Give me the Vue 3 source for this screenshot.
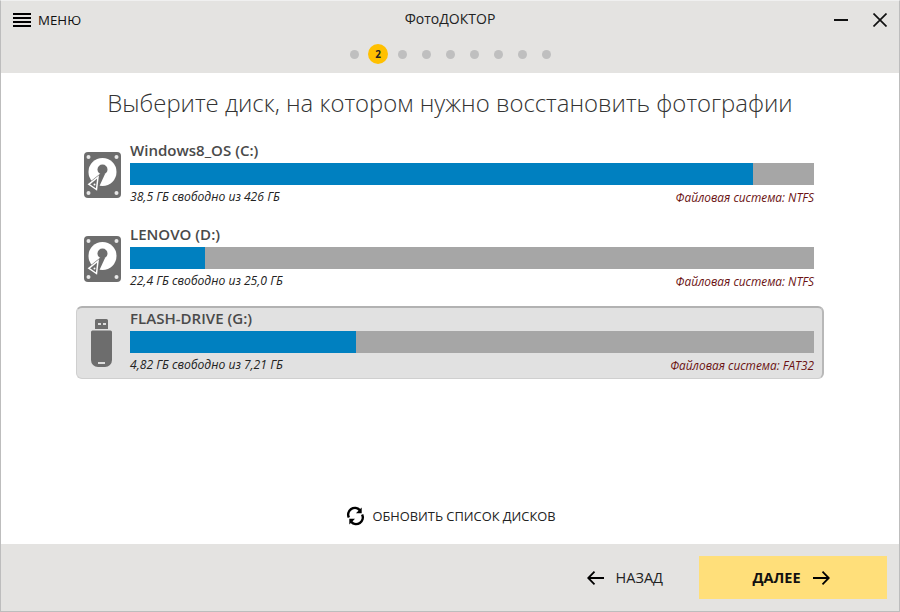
<script setup>
const dots = [1, 2, 3, 4, 5, 6, 7, 8, 9]
const drives = [
  { name: 'Windows8_OS (C:)', used: 91.1, free: '38,5 ГБ свободно из 426 ГБ', fs: 'Файловая система: NTFS', type: 'hdd', selected: false },
  { name: 'LENOVO (D:)', used: 10.96, free: '22,4 ГБ свободно из 25,0 ГБ', fs: 'Файловая система: NTFS', type: 'hdd', selected: false },
  { name: 'FLASH-DRIVE (G:)', used: 33.04, free: '4,82 ГБ свободно из 7,21 ГБ', fs: 'Файловая система: FAT32', type: 'usb', selected: true }
]
</script>

<template>
  <div class="window">
    <header class="header">
      <div class="head-top">
        <div class="menu">
          <svg class="burger" width="18" height="14" viewBox="0 0 18 14"><path d="M0 1h18M0 5h18M0 9h18M0 13h18" stroke="#000" stroke-width="2" /></svg>
          <span>МЕНЮ</span>
        </div>
        <div class="app-title">ФотоДОКТОР</div>
        <div class="win-btns">
          <svg width="14" height="14" viewBox="0 0 14 14"><path d="M0 7h14" stroke="#111" stroke-width="2" /></svg>
          <svg width="14" height="14" viewBox="0 0 14 14"><path d="M0.5 0.5l13 13M13.5 0.5l-13 13" stroke="#111" stroke-width="1.7" /></svg>
        </div>
      </div>
      <div class="steps">
        <span v-for="d in dots" :key="d" class="dot" :class="{ active: d === 2 }">{{ d === 2 ? '2' : '' }}</span>
      </div>
    </header>

    <main class="content">
      <h1 class="title">Выберите диск, на котором нужно восстановить фотографии</h1>
      <div class="drives">
        <div v-for="dr in drives" :key="dr.name" class="drive" :class="{ selected: dr.selected }">
          <div class="icon">
            <svg v-if="dr.type === 'hdd'" width="37" height="46" viewBox="0 0 37 46">
              <rect width="37" height="46" rx="4" fill="#6d6d6d" />
              <circle cx="4.5" cy="5" r="2" fill="#e8e8e8" /><circle cx="32.5" cy="5" r="2" fill="#e8e8e8" />
              <circle cx="4.5" cy="41" r="2" fill="#e8e8e8" /><circle cx="32.5" cy="41" r="2" fill="#e8e8e8" />
              <circle cx="18.5" cy="20" r="14" fill="#fff" />
              <circle cx="18.5" cy="17.5" r="5" fill="#6d6d6d" />
              <path d="M17 21L2.5 32.5 12.5 40.5 21 22z" fill="#6d6d6d" />
              <path d="M4.8 32.3L14 25 12.5 37.5z" fill="none" stroke="#fff" stroke-width="1.5" />
              <circle cx="10.5" cy="32.5" r="1" fill="#fff" />
            </svg>
            <svg v-else class="usb" width="21" height="48" viewBox="0 0 21 48">
              <path d="M4 1.5A1.5 1.5 0 0 1 5.5 0h10A1.5 1.5 0 0 1 17 1.5V10H4z" fill="#6d6d6d" />
              <rect x="7" y="4" width="3" height="2" fill="#ddd" /><rect x="12" y="4" width="3" height="2" fill="#ddd" />
              <path d="M0 13a1.5 1.5 0 0 1 1.5-1.5h18A1.5 1.5 0 0 1 21 13v28a7 7 0 0 1-7 7H7a7 7 0 0 1-7-7z" fill="#6d6d6d" />
              <rect x="7" y="43" width="7" height="2" fill="#ddd" />
            </svg>
          </div>
          <div class="info">
            <div class="name">{{ dr.name }}</div>
            <div class="bar"><div class="fill" :style="{ width: dr.used + '%' }"></div></div>
            <div class="meta">
              <span class="free">{{ dr.free }}</span>
              <span class="fs">{{ dr.fs }}</span>
            </div>
          </div>
        </div>
      </div>
      <div class="refresh">
        <svg width="19" height="20" viewBox="0 0 20 20" fill="none" stroke="#000" stroke-width="2.6">
          <path d="M3 11.5A7 7 0 0 1 14.5 3.8" />
          <path d="M17 8.5A7 7 0 0 1 5.5 16.2" />
          <path d="M16.5 0.5v6h-6z" fill="#000" stroke="none" transform="translate(0 0.5)" />
          <path d="M3.5 19.5v-6h6z" fill="#000" stroke="none" transform="translate(0 -0.5)" />
        </svg>
        <span>ОБНОВИТЬ СПИСОК ДИСКОВ</span>
      </div>
    </main>

    <footer class="footer">
      <div class="back">
        <svg width="17" height="14" viewBox="0 0 17 14" fill="none" stroke="#000" stroke-width="1.8"><path d="M17 7H1M7.5 0.7L1.2 7l6.3 6.3" /></svg>
        <span>НАЗАД</span>
      </div>
      <div class="next">
        <span>ДАЛЕЕ</span>
        <svg width="17" height="14" viewBox="0 0 17 14" fill="none" stroke="#000" stroke-width="1.8"><path d="M0 7h16M9.5 0.7L15.8 7l-6.3 6.3" /></svg>
      </div>
    </footer>
  </div>
</template>

<style scoped>
.window {
  width: 900px;
  height: 612px;
  box-sizing: border-box;
  border: 1px solid #bdbdbd;
  border-top-color: #f0f0f0;
  background: #fff;
  display: flex;
  flex-direction: column;
  font-family: "Open Sans", sans-serif;
  color: #222;
  overflow: hidden;
}
.header {
  height: 72px;
  flex: none;
  background: #e4e3e1;
  display: flex;
  flex-direction: column;
}
.head-top {
  height: 42px;
  display: grid;
  grid-template-columns: 1fr auto 1fr;
  align-items: start;
}
.menu {
  display: flex;
  align-items: center;
  gap: 7px;
  padding: 11px 0 0 12px;
  font-size: 13.3px;
  line-height: 16px;
  color: #111;
}
.app-title {
  font-size: 14px;
  line-height: 18px;
  padding-top: 9px;
  color: #222;
}
.win-btns {
  display: flex;
  justify-content: flex-end;
  gap: 25px;
  padding: 12px 12px 0 0;
}
.steps {
  display: flex;
  align-items: center;
  justify-content: center;
  gap: 15px;
  height: 20px;
  margin-top: 1px;
}
.dot {
  width: 9px;
  height: 9px;
  border-radius: 50%;
  background: #bfbfbf;
}
.dot.active {
  width: 20px;
  height: 20px;
  margin: 0 -5.5px;
  background: #ffc000;
  font-size: 10px;
  font-weight: 700;
  line-height: 20px;
  text-align: center;
  color: #222;
}
.content {
  flex: 1;
  display: flex;
  flex-direction: column;
  align-items: center;
  min-height: 0;
}
.title {
  margin: 14px 0 0;
  font-size: 23.9px;
  line-height: 32px;
  font-weight: 300;
  color: #333;
  white-space: nowrap;
}
.drives {
  width: 748px;
  margin-top: 19px;
  display: flex;
  flex-direction: column;
  gap: 11px;
}
.drive {
  height: 73px;
  box-sizing: border-box;
  display: flex;
  align-items: flex-start;
  border-radius: 6px;
  padding-right: 8px;
  border: 1px solid transparent;
  border-width: 2px 2px 1px 1px;
}
.drive.selected {
  background: #e1e1e1;
  border-color: #b2b2b2 #b8b8b8 #cfcfcf #cfcfcf;
}
.icon {
  width: 53px;
  height: 70px;
  flex: none;
  display: flex;
  align-items: center;
  justify-content: center;
  padding-right: 2px;
  box-sizing: border-box;
}
.usb {
  margin-right: 2px;
}
.info {
  flex: 1;
  min-width: 0;
}
.name {
  font-size: 15.05px;
  line-height: 20px;
  font-weight: 600;
  color: #4a4a4a;
  height: 23px;
}
.bar {
  height: 22px;
  background: #a6a6a6;
}
.fill {
  height: 100%;
  background: #0080c0;
}
.meta {
  display: flex;
  justify-content: space-between;
  font-size: 12.15px;
  line-height: 14px;
  font-style: italic;
  margin-top: 5px;
  height: 14px;
}
.free {
  color: #222;
}
.fs {
  color: #6b1212;
  font-size: 11.85px;
}
.refresh {
  margin-top: auto;
  margin-bottom: 18px;
  display: flex;
  align-items: center;
  gap: 7px;
  font-size: 12.85px;
  line-height: 20px;
  color: #222;
  margin-left: 2px;
}
.footer {
  height: 67px;
  flex: none;
  background: #e4e3e1;
  display: flex;
  align-items: center;
  justify-content: flex-end;
  padding: 0 12px 0 0;
  box-sizing: border-box;
}
.back {
  display: flex;
  align-items: center;
  gap: 12px;
  font-size: 14.5px;
  color: #222;
  margin-right: 36px;
}
.next {
  width: 188px;
  height: 43px;
  background: #ffdf7a;
  display: flex;
  align-items: center;
  justify-content: center;
  gap: 12px;
  padding-right: 4px;
  box-sizing: border-box;
  font-size: 14.5px;
  font-weight: 700;
  color: #111;
}
</style>
